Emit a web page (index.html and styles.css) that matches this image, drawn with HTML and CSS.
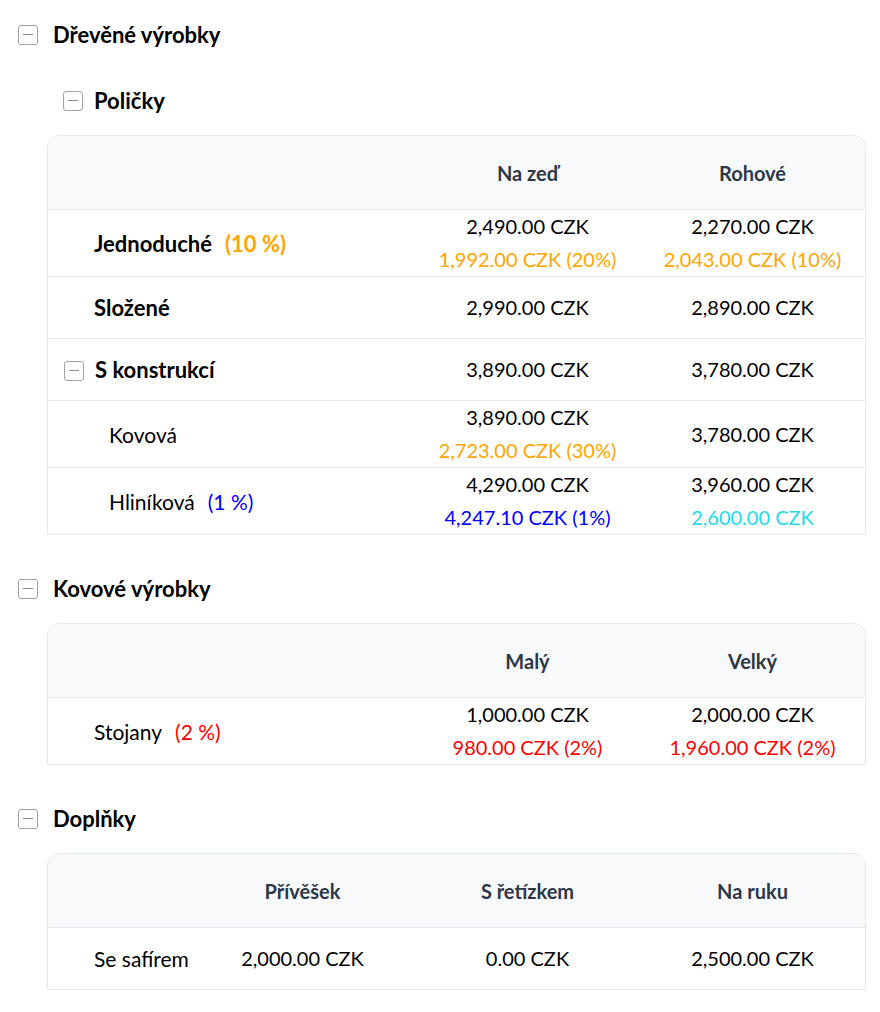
FILE: index.html
```html
<!DOCTYPE html>
<html lang="cs">
<head>
<meta charset="utf-8">
<title>Ceník</title>
<link rel="stylesheet" href="styles.css">
</head>
<body>
<div class="page">

  <section class="group">
    <div class="group-head lvl1"><span class="toggle"></span><span class="title">Dřevěné výrobky</span></div>
    <div class="subgroup">
      <div class="group-head lvl2"><span class="toggle"></span><span class="title">Poličky</span></div>
      <div class="table-wrap">
        <table class="price-table">
          <thead>
            <tr><th class="label-col"></th><th class="val-col">Na zeď</th><th class="val-col">Rohové</th></tr>
          </thead>
          <tbody>
            <tr>
              <td class="label strong"><span class="name">Jednoduché</span><span class="pct orange">(10 %)</span></td>
              <td class="val"><div class="line">2,490.00 CZK</div><div class="line orange">1,992.00 CZK (20%)</div></td>
              <td class="val"><div class="line">2,270.00 CZK</div><div class="line orange">2,043.00 CZK (10%)</div></td>
            </tr>
            <tr>
              <td class="label strong"><span class="name">Složené</span></td>
              <td class="val"><div class="line">2,990.00 CZK</div></td>
              <td class="val"><div class="line">2,890.00 CZK</div></td>
            </tr>
            <tr>
              <td class="label strong tree"><span class="toggle"></span><span class="name">S konstrukcí</span></td>
              <td class="val"><div class="line">3,890.00 CZK</div></td>
              <td class="val"><div class="line">3,780.00 CZK</div></td>
            </tr>
            <tr>
              <td class="label child"><span class="name">Kovová</span></td>
              <td class="val"><div class="line">3,890.00 CZK</div><div class="line orange">2,723.00 CZK (30%)</div></td>
              <td class="val"><div class="line">3,780.00 CZK</div></td>
            </tr>
            <tr>
              <td class="label child"><span class="name">Hliníková</span><span class="pct blue">(1 %)</span></td>
              <td class="val"><div class="line">4,290.00 CZK</div><div class="line blue">4,247.10 CZK (1%)</div></td>
              <td class="val"><div class="line">3,960.00 CZK</div><div class="line cyan">2,600.00 CZK</div></td>
            </tr>
          </tbody>
        </table>
      </div>
    </div>
  </section>

  <section class="group">
    <div class="group-head lvl1"><span class="toggle"></span><span class="title">Kovové výrobky</span></div>
    <div class="table-wrap">
      <table class="price-table">
        <thead>
          <tr><th class="label-col"></th><th class="val-col">Malý</th><th class="val-col">Velký</th></tr>
        </thead>
        <tbody>
          <tr>
            <td class="label"><span class="name">Stojany</span><span class="pct red">(2 %)</span></td>
            <td class="val"><div class="line">1,000.00 CZK</div><div class="line red">980.00 CZK (2%)</div></td>
            <td class="val"><div class="line">2,000.00 CZK</div><div class="line red">1,960.00 CZK (2%)</div></td>
          </tr>
        </tbody>
      </table>
    </div>
  </section>

  <section class="group">
    <div class="group-head lvl1"><span class="toggle"></span><span class="title">Doplňky</span></div>
    <div class="table-wrap">
      <table class="price-table">
        <thead>
          <tr><th class="label-col"></th><th class="val-col">Přívěšek</th><th class="val-col">S řetízkem</th><th class="val-col">Na ruku</th></tr>
        </thead>
        <tbody>
          <tr>
            <td class="label"><span class="name">Se safírem</span></td>
            <td class="val"><div class="line">2,000.00 CZK</div></td>
            <td class="val"><div class="line">0.00 CZK</div></td>
            <td class="val"><div class="line">2,500.00 CZK</div></td>
          </tr>
        </tbody>
      </table>
    </div>
  </section>

</div>
</body>
</html>
```

FILE: styles.css
```css
html, body {
  margin: 0;
  padding: 0;
  background: #ffffff;
}

body {
  font-family: "Lato", "Noto Sans", sans-serif;
  font-size: 20px;
  color: #000000;
}

.page {
  padding: 18px 14px 20px 18px;
}

.group + .group {
  margin-top: 37px;
}

.group-head {
  display: flex;
  align-items: center;
  height: 33px;
  font-weight: 700;
  font-size: 22px;
  color: #000;
}

.group-head.lvl1 {
  gap: 15px;
}

.group-head.lvl2 {
  gap: 11px;
  padding-left: 45px;
}

.subgroup {
  margin-top: 33px;
}

.toggle {
  position: relative;
  display: inline-block;
  flex: none;
  width: 20px;
  height: 20px;
  box-sizing: border-box;
  border: 1.5px solid #a3a3a3;
  border-radius: 3px;
  background: #fff;
}

.toggle::after {
  content: "";
  position: absolute;
  left: 4px;
  right: 4px;
  top: 8px;
  height: 1px;
  background: #8a8a8a;
}

.table-wrap {
  margin-top: 18px;
  margin-left: 29px;
  border: 1px solid #e4e9f1;
  border-radius: 12px 12px 0 0;
  overflow: hidden;
}

.price-table {
  width: 100%;
  border-collapse: separate;
  border-spacing: 0;
  table-layout: fixed;
}

.price-table th {
  height: 73px;
  padding: 0;
  background: #f8f9fb;
  color: #2d3748;
  font-weight: 700;
  font-size: 20px;
  text-align: center;
  vertical-align: middle;
  border-bottom: 1px solid #e4e9f1;
}

.price-table .val-col {
  width: 225px;
}

.price-table td {
  padding: 0;
  height: 61px;
  vertical-align: middle;
  border-bottom: 1px solid #e4e9f1;
}

.price-table tbody tr:last-child td {
  border-bottom: none;
}

.label {
  padding-left: 46px !important;
  white-space: nowrap;
  font-size: 21px;
}

.label.tree {
  padding-left: 16px !important;
}

.label.tree .toggle {
  vertical-align: -3px;
  margin-right: 11px;
}

.label.child {
  padding-left: 61px !important;
}

.label.strong {
  font-weight: 700;
  font-size: 22px;
}

.pct {
  margin-left: 13px;
}

.val {
  text-align: center;
}

.line {
  line-height: 33px;
}

.orange { color: #ffa500; }
.blue { color: #0000ff; }
.cyan { color: #27d8e8; }
.red { color: #ff0000; }
```
